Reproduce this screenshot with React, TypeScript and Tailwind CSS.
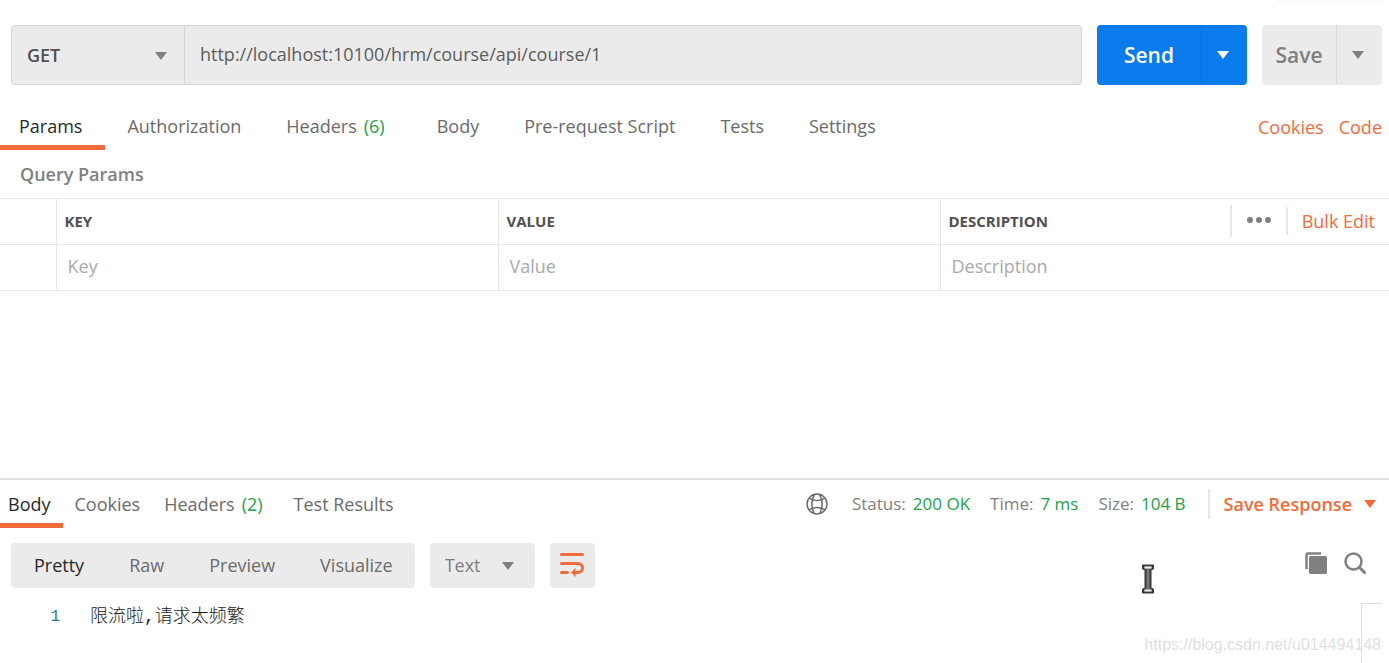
import clsx from "clsx";

const requestTabs = [
  { name: "Params" },
  { name: "Authorization" },
  { name: "Headers", count: 6 },
  { name: "Body" },
  { name: "Pre-request Script" },
  { name: "Tests" },
  { name: "Settings" },
];

const responseTabs = [
  { name: "Body" },
  { name: "Cookies" },
  { name: "Headers", count: 2 },
  { name: "Test Results" },
];

const viewModes = ["Pretty", "Raw", "Preview", "Visualize"];

const stats = [
  { label: "Status:", value: "200 OK" },
  { label: "Time:", value: "7 ms" },
  { label: "Size:", value: "104 B" },
];

const Caret = ({ className }: { className?: string }) => (
  <svg width="12" height="8" viewBox="0 0 12 8" className={className} aria-hidden="true">
    <path d="M0 0H12L6 8Z" fill="currentColor" />
  </svg>
);

const GlobeIcon = () => (
  <svg width="22" height="22" viewBox="0 0 22 22" fill="none" stroke="currentColor" strokeWidth="1.5" aria-hidden="true">
    <circle cx="11" cy="11" r="10" />
    <path d="M8.500 1.500C5 7 5 15 8.500 20.500M13.500 1.500C17 7 17 15 13.500 20.500" />
    <path d="M3 5C7 8.200 15 8.200 19 5M3 17C7 13.800 15 13.800 19 17" />
  </svg>
);

const WrapIcon = () => (
  <svg width="24" height="24" viewBox="0 0 24 24" fill="none" stroke="currentColor" strokeWidth="3" strokeLinecap="round" aria-hidden="true">
    <path d="M1.500 1.500H22.500" />
    <path d="M1.500 10.500H18A4.500 4.500 0 0 1 18 19.500H15" />
    <path d="M1.500 19.500H7.500" />
    <path d="M15.500 15V24L11 19.500Z" fill="currentColor" stroke="none" />
  </svg>
);

const CopyIcon = () => (
  <svg width="22" height="22" viewBox="0 0 22 22" aria-hidden="true">
    <path d="M1.500 17V2.500Q1.500 1.500 2.500 1.500H16" fill="none" stroke="currentColor" strokeWidth="2.500" />
    <rect x="4" y="4" width="18" height="18" rx="1.500" fill="currentColor" />
  </svg>
);

const SearchIcon = () => (
  <svg width="22" height="22" viewBox="0 0 22 22" fill="none" stroke="currentColor" strokeWidth="2.500" strokeLinecap="round" aria-hidden="true">
    <circle cx="9.500" cy="9.500" r="8" />
    <path d="M15.500 15.500L20.500 20.500" strokeWidth="3" />
  </svg>
);

// mouse pointer resting over the response pane
const TextCursor = () => (
  <svg width="14" height="30" viewBox="0 0 14 30" className="absolute top-[84px] right-[234px]" aria-hidden="true">
    <path
      d="M2 1.500H12V4.500L9.500 6V24L12 25.500V28.500H2V25.500L4.500 24V6L2 4.500Z"
      fill="#777777"
      stroke="#3a3a3a"
      strokeWidth="2"
      strokeLinejoin="round"
    />
    <path d="M3.500 3.500H10.500M3.500 26.500H10.500" stroke="#e6e6e6" strokeWidth="2" />
  </svg>
);

const Count = ({ value }: { value: number }) => (
  <span className="mx-[7px] text-[#24a148]">({value})</span>
);

const RequestBar = () => (
  <form className="flex h-[60px] gap-[15px]" onSubmit={(e) => e.preventDefault()}>
    <div className="flex min-w-0 flex-1 rounded border border-[#d4d4d4] bg-[#ebebeb]">
      <div className="relative w-[173px] border-r border-[#d4d4d4]">
        <select
          aria-label="Request method"
          className="h-full w-full appearance-none px-[15px] font-semibold text-[#505050] outline-none"
        >
          <option>GET</option>
          <option>POST</option>
        </select>
        <Caret className="pointer-events-none absolute top-[26px] right-[17px] text-[#808080]" />
      </div>
      <input
        type="text"
        aria-label="Request URL"
        defaultValue="http://localhost:10100/hrm/course/api/course/1"
        className="min-w-0 flex-1 px-[15px] pb-0.5 text-[#5c5c5c] outline-none"
      />
    </div>
    <div className="flex w-[150px] overflow-hidden rounded bg-[#097bed] text-white">
      <button type="submit" className="flex-1 border-r border-[#0a6fd6] text-[21px] font-semibold">
        Send
      </button>
      <button type="button" aria-label="Send options" className="flex w-[45px] items-center justify-center pr-1">
        <Caret />
      </button>
    </div>
    <div className="flex w-[120px] overflow-hidden rounded bg-[#ebebeb] text-[#808080]">
      <button type="button" className="flex-1 border-r border-[#d8d8d8] text-[21px] font-semibold">
        Save
      </button>
      <button type="button" aria-label="Save options" className="flex w-[45px] items-center justify-center pr-1">
        <Caret />
      </button>
    </div>
  </form>
);

const RequestTabs = () => (
  <div className="flex h-[47px] items-stretch">
    <nav className="flex flex-1">
      {requestTabs.map((tab, i) => (
        <button
          key={tab.name}
          type="button"
          className={clsx(
            "border-b-[5px] pt-1 pr-[23px] whitespace-nowrap",
            i === 0 ? "border-[#f26b3a] pl-[19px] text-[#282828]" : "border-transparent pl-[22px] text-[#6b6b6b]",
          )}
        >
          {tab.name}
          {tab.count && <Count value={tab.count} />}
        </button>
      ))}
    </nav>
    <div className="flex items-center gap-[15px] pr-[7px] text-[#f26b3a]">
      <a href="#cookies">Cookies</a>
      <a href="#code">Code</a>
    </div>
  </div>
);

const headCell = "border-r border-[#e6e6e6] px-2 pb-0.5 text-left text-[15px] font-bold text-[#505050]";
const inputCell = "w-full px-[11px] pb-1 text-[#505050] outline-none placeholder:text-[#a9a9a9]";

const ParamsTable = () => (
  <table className="w-full table-fixed border-collapse border-y border-[#e6e6e6]">
    <colgroup>
      <col className="w-14" />
      <col className="w-[442px]" />
      <col className="w-[442px]" />
      <col />
    </colgroup>
    <thead>
      <tr className="h-[46px] border-b border-[#e6e6e6]">
        <td className="border-r border-[#e6e6e6]" />
        <th className={headCell}>KEY</th>
        <th className={headCell}>VALUE</th>
        <th className="pb-0.5 pl-2 text-left text-[15px] font-bold text-[#505050]">
          <div className="flex items-center">
            <span className="flex-1">DESCRIPTION</span>
            <button
              type="button"
              aria-label="More options"
              className="flex h-8 w-14 items-center justify-center border-l-2 border-[#e6e6e6] pb-0.5 text-[#808080]"
            >
              <svg width="24" height="6" viewBox="0 0 24 6" fill="currentColor" aria-hidden="true">
                <circle cx="3" cy="3" r="3" />
                <circle cx="12" cy="3" r="3" />
                <circle cx="21" cy="3" r="3" />
              </svg>
            </button>
            <button
              type="button"
              className="h-[30px] rounded-l border-l-2 border-[#e6e6e6] pr-[14px] pl-[14px] text-lg leading-6 font-normal text-[#f26b3a]"
            >
              Bulk Edit
            </button>
          </div>
        </th>
      </tr>
    </thead>
    <tbody>
      <tr className="h-[46px]">
        <td className="border-r border-[#e6e6e6]" />
        <td className="border-r border-[#e6e6e6]">
          <input type="text" aria-label="Key" placeholder="Key" className={inputCell} />
        </td>
        <td className="border-r border-[#e6e6e6]">
          <input type="text" aria-label="Value" placeholder="Value" className={inputCell} />
        </td>
        <td>
          <input type="text" aria-label="Description" placeholder="Description" className={inputCell} />
        </td>
      </tr>
    </tbody>
  </table>
);

const ResponseHeader = () => (
  <div className="flex h-12 items-stretch">
    <nav className="flex flex-1">
      {responseTabs.map((tab, i) => (
        <button
          key={tab.name}
          type="button"
          className={clsx(
            "border-b-[5px] pt-1 pr-3 whitespace-nowrap",
            i === 0 ? "border-[#f26b3a] pl-2 text-[#282828]" : "border-transparent pl-3 text-[#6b6b6b]",
          )}
        >
          {tab.name}
          {tab.count && <Count value={tab.count} />}
        </button>
      ))}
    </nav>
    <div className="flex items-center pr-[13px]">
      <button type="button" aria-label="Network" className="mr-6 text-[#6b6b6b]">
        <GlobeIcon />
      </button>
      <dl className="flex gap-5 text-[17px] text-[#808080]">
        {stats.map((s) => (
          <div key={s.label} className="flex gap-[7px]">
            <dt>{s.label}</dt>
            <dd className="text-[#24a148]">{s.value}</dd>
          </div>
        ))}
      </dl>
      <button
        type="button"
        className="ml-[22px] flex h-[30px] items-center gap-3 border-l-2 border-[#e6e6e6] pl-[14px] font-semibold text-[#f26b3a]"
      >
        Save Response
        <Caret />
      </button>
    </div>
  </div>
);

const ResponseToolbar = () => (
  <div className="flex h-[45px] gap-[15px] pr-[23px] pl-[11px]">
    <div className="flex rounded bg-[#ebebeb]">
      {viewModes.map((mode, i) => (
        <button
          key={mode}
          type="button"
          className={clsx("pr-[22px] pb-0.5 pl-[23px]", i === 0 ? "text-[#282828]" : "text-[#6b6b6b]")}
        >
          {mode}
        </button>
      ))}
    </div>
    <div className="relative w-[105px] rounded bg-[#ebebeb]">
      <select
        aria-label="Response format"
        className="h-full w-full appearance-none px-[15px] pb-0.5 text-[#808080] outline-none"
      >
        <option>Text</option>
        <option>JSON</option>
      </select>
      <Caret className="pointer-events-none absolute top-[19px] right-[21px] text-[#808080]" />
    </div>
    <button
      type="button"
      aria-label="Wrap lines"
      className="flex w-[45px] items-center justify-center rounded bg-[#ebebeb] pb-0.5 text-[#f26b3a]"
    >
      <WrapIcon />
    </button>
    <div className="flex flex-1 items-center justify-end gap-[17px] pb-1.5 text-[#808080]">
      <button type="button" aria-label="Copy">
        <CopyIcon />
      </button>
      <button type="button" aria-label="Search">
        <SearchIcon />
      </button>
    </div>
  </div>
);

const App = () => {
  return (
    <div className="relative flex min-h-screen flex-col overflow-hidden bg-white font-['Open_Sans','Noto_Sans_CJK_SC',sans-serif] text-lg leading-6">
      <section className="flex-1">
        <div className="pr-[7px] pl-[11px]">
          <div className="mb-[22px] ml-auto h-[3px] w-[105px] rounded-b bg-[#fafafa]" />
          <RequestBar />
        </div>
        <div className="pt-[18px]">
          <RequestTabs />
        </div>
        <h2 className="px-5 py-3 font-semibold text-[#808080]">Query Params</h2>
        <ParamsTable />
      </section>

      <section className="relative min-h-[185px] border-t-2 border-[#e0e0e0]">
        <ResponseHeader />
        <div className="pt-[15px]">
          <ResponseToolbar />
        </div>
        <div className="flex pt-[15px]">
          <pre className="flex flex-1 pt-0.5 font-['Liberation_Mono','Noto_Sans_CJK_SC',monospace] text-lg leading-6 text-[#1a1a1a]">
            <span className="w-[60px] text-right text-base leading-6 text-[#237893]">1</span>
            <code className="pl-[30px] font-['Liberation_Mono','Noto_Sans_CJK_SC',monospace] font-light">限流啦,请求太频繁</code>
          </pre>
          <div className="mr-[7px] h-[60px] w-[21px] border-t border-l border-[#dedede]" />
        </div>
        <TextCursor />
        <span className="absolute right-2 bottom-1.5 font-['Liberation_Sans',sans-serif] text-base leading-6 text-[#e0e0e0]">
          https://blog.csdn.net/u014494148
        </span>
      </section>
    </div>
  );
};

export default App;
